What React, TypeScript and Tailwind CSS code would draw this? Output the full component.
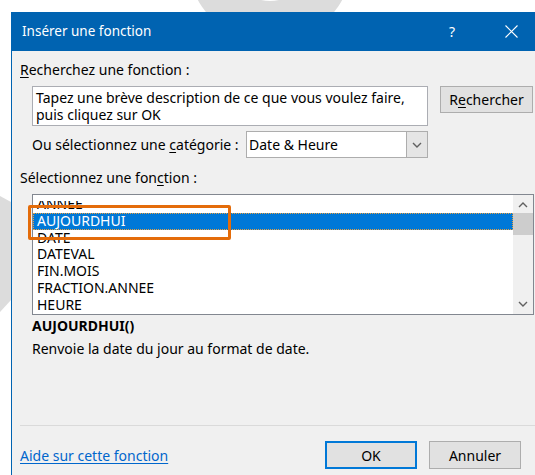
import { Fragment } from "react";

const functions = [
  "ANNEE",
  "AUJOURDHUI",
  "DATE",
  "DATEVAL",
  "FIN.MOIS",
  "FRACTION.ANNEE",
  "HEURE",
];

// label with an access-key letter underlined, like a Win32 dialog
function Mnemonic({ text, at }: { text: string; at: number }) {
  return (
    <>
      {text.slice(0, at)}
      <span className="underline underline-offset-2">{text[at]}</span>
      {text.slice(at + 1)}
    </>
  );
}

function Chevron({ dir, className }: { dir: "up" | "down"; className?: string }) {
  return (
    <svg width="10" height="6" viewBox="0 0 10 6" className={className}>
      <path
        d={dir === "up" ? "M1 5 L5 1 L9 5" : "M1 1 L5 5 L9 1"}
        fill="none"
        stroke="#606060"
        strokeWidth="1.4"
      />
    </svg>
  );
}

export default function App() {
  const selected = "AUJOURDHUI";

  return (
    <div
      className="relative h-[475px] w-[535px] overflow-hidden bg-white pl-[11px] pt-[12px] text-[14px] text-black"
      style={{ fontFamily: '"Noto Sans", "Open Sans", sans-serif' }}
    >
      {/* faint background watermark */}
      <svg className="absolute left-0 top-0 z-0" width="535" height="475">
        <path
          fillRule="evenodd"
          fill="#dcdcdc"
          d="M188 -39 a82 82 0 1 0 164 0 a82 82 0 1 0 -164 0 Z M230 -39 a40 40 0 1 0 80 0 a40 40 0 1 0 -80 0 Z"
        />
        <path fill="#dcdcdc" d="M0 196 L11 202 L11 300 L0 312 Z" />
      </svg>

      <div className="relative z-10 flex w-[545px] flex-col">
        {/* title bar */}
        <div className="flex h-[39px] items-center bg-[#0063b1] pl-[11px] text-[13.5px] text-white">
          <span className="flex-1">Insérer une fonction</span>
          <span className="w-[56px] text-[14px]">?</span>
          <svg width="13" height="13" viewBox="0 0 13 13" className="mr-[38px]">
            <path d="M0.5 0.5 L12.5 12.5 M12.5 0.5 L0.5 12.5" stroke="white" strokeWidth="1.1" />
          </svg>
        </div>

        <div className="flex h-[440px] flex-col border-l border-[#0063b1] bg-[#f0f0f0] pl-[8px]">
          <div className="mt-[11px] h-[16px] leading-[16px]">
            <Mnemonic text="Recherchez une fonction :" at={0} />
          </div>

          <div className="ml-[12px] mt-[8px] flex items-start gap-[12px]">
            <div className="h-[40px] w-[396px] border border-[#abadb3] bg-white px-[3px] pt-[2px] leading-[17px]">
              Tapez une brève description de ce que vous voulez faire,
              <br />
              puis cliquez sur OK
            </div>
            <button className="h-[27px] w-[93px] border border-[#adadad] bg-[#e1e1e1] leading-[16px]">
              <Mnemonic text="Rechercher" at={1} />
            </button>
          </div>

          <div className="ml-[12px] mt-[5px] flex h-[27px] items-center">
            <span className="w-[214px] whitespace-nowrap leading-[16px]">
              Ou sélectionnez une <Mnemonic text="catégorie" at={0} /> :
            </span>
            <div className="flex h-[27px] w-[182px] items-stretch border border-[#adadad] bg-white">
              <span className="flex flex-1 items-center pl-[2px]">Date &amp; Heure</span>
              <span className="flex w-[21px] items-center justify-center border-l border-[#adadad] bg-[#e5e5e5]">
                <Chevron dir="down" />
              </span>
            </div>
          </div>

          <div className="mt-[12px] h-[16px] leading-[16px]">
            <Mnemonic text="Sélectionnez une fonction :" at={20} />
          </div>

          {/* function list, scrolled so the first entry is half hidden */}
          <div className="relative ml-[12px] mt-[8px] flex h-[121px] w-[502px] border border-[#828790] bg-white">
            <div className="flex-1 pt-[6px]">
              <div className="h-[113px] overflow-hidden">
                <ul className="-mt-[5px]">
                  {functions.map((fn) => (
                    <Fragment key={fn}>
                      {fn === selected ? (
                        <li className="h-[16.75px] border border-dotted border-[#e8a040] bg-[#0078d7] pl-[3px] leading-[14.75px] text-white">
                          {fn}
                        </li>
                      ) : (
                        <li className="h-[16.75px] pl-[4px] leading-[16.75px]">{fn}</li>
                      )}
                    </Fragment>
                  ))}
                </ul>
              </div>
            </div>
            <div className="flex w-[20px] flex-col items-center bg-[#f0f0f0]">
              <Chevron dir="up" className="mt-[7px]" />
              <div className="mt-[5px] h-[22px] w-[20px] bg-[#cdcdcd]" />
              <Chevron dir="down" className="mt-auto mb-[7px]" />
            </div>

            {/* highlight around the chosen function */}
            <div className="absolute -left-[5px] top-[10px] h-[35px] w-[203px] rounded-[2px] border-[3px] border-[#e46c0a]" />
          </div>

          <div className="ml-[12px] mt-[3px] h-[16px] font-bold leading-[16px]">AUJOURDHUI()</div>
          <div className="ml-[12px] mt-[7px] h-[16px] leading-[16px]">
            Renvoie la date du jour au format de date.
          </div>

          <div className="mt-[68px] h-px bg-[#dadada]" />

          <div className="mt-[15px] flex items-center">
            <a className="w-[305px] text-[#0066cc] underline underline-offset-2">Aide sur cette fonction</a>
            <button className="h-[28px] w-[92px] border-2 border-[#0078d7] bg-[#e1e1e1]">OK</button>
            <button className="ml-[12px] h-[28px] w-[92px] border border-[#adadad] bg-[#e1e1e1]">
              Annuler
            </button>
          </div>
        </div>
      </div>
    </div>
  );
}
